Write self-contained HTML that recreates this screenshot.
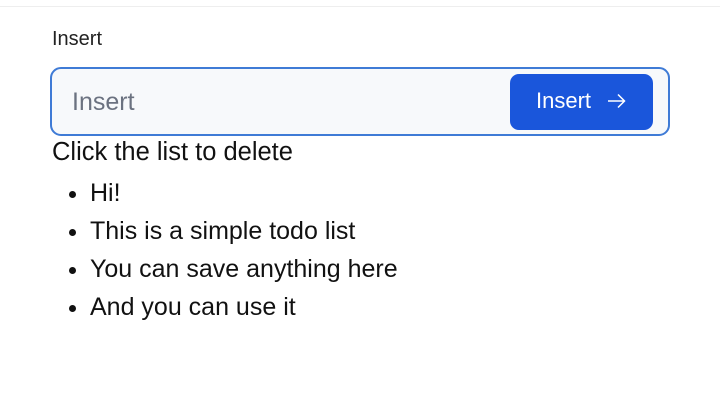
<!DOCTYPE html>
<html><head><style>
body{margin:0;width:720px;height:404px;background:#fff;font-family:"Liberation Sans",sans-serif;color:#111;position:relative;overflow:hidden}
.top{position:absolute;left:0;right:0;top:6px;height:1px;background:#eee}
.lbl{position:absolute;left:52px;top:28px;font-size:20px;color:#222}
.box{position:absolute;left:50px;top:67px;width:616px;height:65px;border:2px solid #3f7bd6;border-radius:11px;background:#f7f9fb}
.ph{position:absolute;left:20px;top:19px;font-size:25px;color:#6b7280}
.btn{position:absolute;left:458px;top:5px;width:143px;height:56px;background:#1a56db;border-radius:9px;color:#fff;font-size:22px;line-height:54px}
.btn span{position:absolute;left:26px}
.btn svg{position:absolute;left:97px;top:19px}
.t{position:absolute;left:52px;top:138px;font-size:25.5px}
ul{position:absolute;left:46px;top:174px;margin:0;padding-left:44px;font-size:25px;line-height:38px}
</style></head><body>
<div class="top"></div>
<div class="lbl">Insert</div>
<div class="box"><div class="ph">Insert</div><div class="btn"><span>Insert</span><svg width="20" height="16" viewBox="0 0 20 16"><path d="M1 8H18M11 1.5L17.5 8L11 14.5" fill="none" stroke="#fff" stroke-width="1.5"/></svg></div></div>
<div class="t">Click the list to delete</div>
<ul><li>Hi!</li><li>This is a simple todo list</li><li>You can save anything here</li><li>And you can use it</li></ul>
</body></html>
